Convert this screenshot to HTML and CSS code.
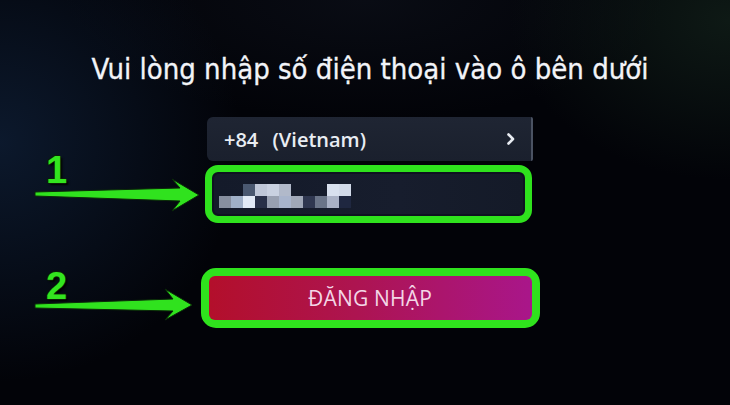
FILE: index.html
```html
<!DOCTYPE html>
<html lang="vi">
<head>
<meta charset="utf-8">
<link rel="stylesheet" href="styles.css">
</head>
<body>
<div class="screen">
  <h1 class="title">Vui lòng nhập số điện thoại vào ô bên dưới</h1>
  <div class="form">
    <div class="country">
      <span class="country-text">+84 (Vietnam)</span>
      <svg class="chev" width="8" height="12" viewBox="0 0 8 12"><path d="M1.5 1.5 L6 6 L1.5 10.5" fill="none" stroke="#e8ecf2" stroke-width="2.6" stroke-linecap="round" stroke-linejoin="round"/></svg>
    </div>
    <div class="phone-hl">
      <div class="phone">
        <div class="pix">
          <div class="row">
            <i style="background:transparent"></i><i style="background:transparent"></i><i style="background:#4a5870"></i><i style="background:#bfc7d8"></i><i style="background:#c9d1e1"></i><i style="background:#b1b9ca"></i><i style="background:transparent"></i><i style="background:transparent"></i><i style="background:transparent"></i><i style="background:#d8e0ee"></i><i style="background:#d2dae9"></i>
          </div>
          <div class="row">
            <i style="background:#878fa0"></i><i style="background:#a0b0c8"></i><i style="background:#e2eaf6"></i><i style="background:#283048"></i><i style="background:#98a0b1"></i><i style="background:#a8b4cc"></i><i style="background:#a0a8b8"></i><i style="background:#2f3750"></i><i style="background:#6a7488"></i><i style="background:#a9b1c5"></i><i style="background:#1f2740"></i>
          </div>
        </div>
      </div>
    </div>
    <div class="btn-hl">
      <div class="btn">ĐĂNG NHẬP</div>
    </div>
  </div>

  <span class="num num1">1</span>
  <span class="num num2">2</span>
  <svg class="arrows" width="730" height="405" viewBox="0 0 730 405">
    <polygon points="35,192 180,188 172,179 199,195 172,211 180,201 35,196" fill="#30e21e" stroke="#0b2a08" stroke-width="1"/>
    <polygon points="35,304 173,299 165,289 192,305 165,320 173,311 35,308" fill="#30e21e" stroke="#0b2a08" stroke-width="1"/>
  </svg>
</div>
</body>
</html>
```

FILE: styles.css
```css
* { box-sizing: border-box; }
html, body { margin: 0; padding: 0; }
body { width: 730px; height: 405px; overflow: hidden; background: #000; }

.screen {
  position: relative;
  width: 730px;
  height: 405px;
  background:
    radial-gradient(ellipse 240px 240px at 0% 35%, rgba(16, 34, 60, 0.7), rgba(0,0,0,0) 100%),
    radial-gradient(ellipse 220px 160px at 100% 5%, rgba(22, 40, 30, 0.6), rgba(0,0,0,0) 100%),
    radial-gradient(ellipse 300px 120px at 50% 0%, rgba(14, 18, 28, 0.6), rgba(0,0,0,0) 100%),
    #020308;
  font-family: "Open Sans", "DejaVu Sans", sans-serif;
  display: flex;
  flex-direction: column;
  align-items: center;
  padding: 48px 0 0 10px;
}

.title {
  margin: 0;
  font-family: "DejaVu Sans Condensed", "DejaVu Sans", sans-serif;
  font-weight: normal;
  font-size: 29px;
  line-height: 42px;
  color: #f2f4f8;
  white-space: nowrap;
  -webkit-text-stroke: 0.3px #f2f4f8;
}

.form {
  margin-top: 27px;
  width: 340px;
  display: flex;
  flex-direction: column;
  align-items: center;
}

.country {
  width: 326px;
  height: 44px;
  background: linear-gradient(180deg, #1f2533, #1a202d);
  border-radius: 6px 2px 2px 6px;
  border-right: 2px solid #4a5262;
  display: flex;
  align-items: center;
  justify-content: space-between;
  padding: 0 16px 0 17px;
}
.country-text {
  font-family: "Open Sans", sans-serif;
  font-weight: 600;
  font-size: 20px;
  color: #e9edf3;
  word-spacing: 9px;
}

.phone-hl {
  margin-top: 4px;
  margin-right: 4px;
  width: 327px;
  height: 58px;
  border: 7px solid #2fe21d;
  border-radius: 13px;
  background: #0e1220;
  padding: 2px;
}
.phone {
  height: 100%;
  border-radius: 5px;
  background: linear-gradient(90deg, #141a2a, #171d2d 60%, #141a28);
  padding: 10px 0 0 5px;
}
.pix { display: flex; flex-direction: column; }
.row { display: flex; }
.row i { display: block; width: 12px; height: 12px; }

.btn-hl {
  margin-top: 45px;
  width: 339px;
  height: 60px;
  border: 8px solid #2fe21d;
  border-radius: 15px;
  background: #2fe21d;
}
.btn {
  height: 100%;
  border-radius: 6px;
  background: linear-gradient(90deg, #b30f2b 0%, #ad1450 45%, #a9168a 100%);
  color: #f3d6e6;
  font-family: "Open Sans", sans-serif;
  font-size: 21px;
  display: flex;
  align-items: center;
  justify-content: center;
  letter-spacing: 0.2px;
}

.num {
  position: absolute;
  font-family: "Liberation Sans", Arial, sans-serif;
  font-weight: bold;
  font-size: 38px;
  line-height: 1;
  color: #33e41f;
  text-shadow: -1px 0 #0a2006, 1px 0 #0a2006, 0 1px #0a2006, 0 -1px #0a2006, 2px 2px 2px #000;
}
.num1 { left: 46px; top: 151px; }
.num2 { left: 46px; top: 267px; }

.arrows { position: absolute; left: 0; top: 0; }
```
